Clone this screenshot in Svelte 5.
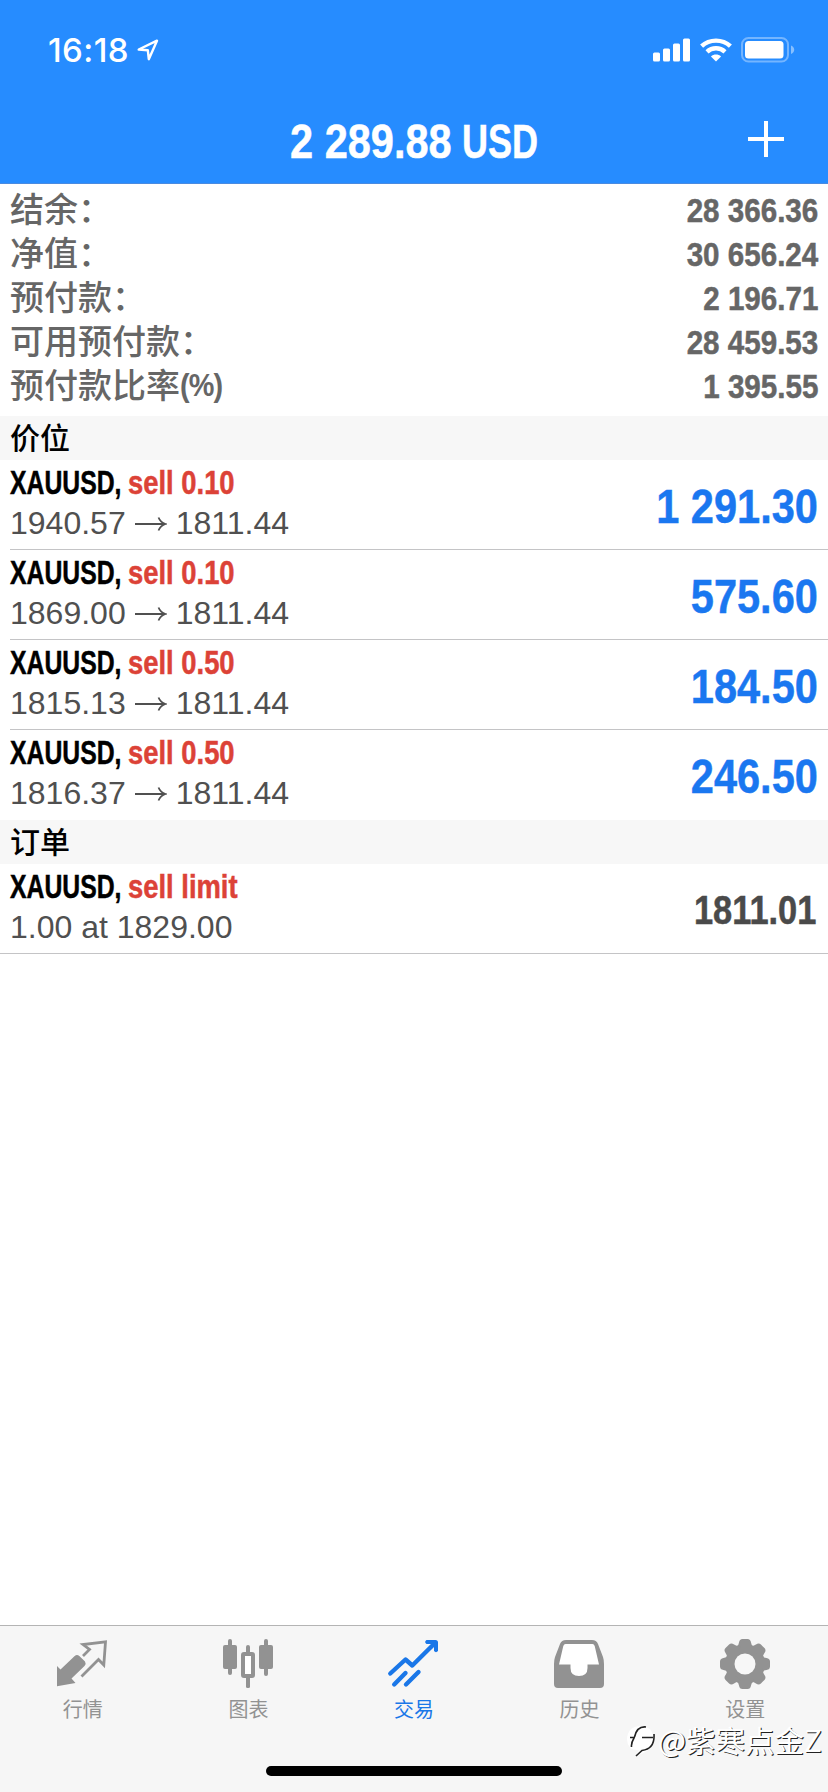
<script lang="ts">
	type Position = { symbol: string; side: string; open: string; current: string; profit: string };

	const balance = { amount: '2 289.88', currency: 'USD' };

	const summary = [
		{ label: '结余：', value: '28 366.36' },
		{ label: '净值：', value: '30 656.24' },
		{ label: '预付款：', value: '2 196.71' },
		{ label: '可用预付款：', value: '28 459.53' },
		{ label: '预付款比率', unit: '(%)', value: '1 395.55' }
	];

	const positions: Position[] = [
		{ symbol: 'XAUUSD,', side: 'sell 0.10', open: '1940.57', current: '1811.44', profit: '1 291.30' },
		{ symbol: 'XAUUSD,', side: 'sell 0.10', open: '1869.00', current: '1811.44', profit: '575.60' },
		{ symbol: 'XAUUSD,', side: 'sell 0.50', open: '1815.13', current: '1811.44', profit: '184.50' },
		{ symbol: 'XAUUSD,', side: 'sell 0.50', open: '1816.37', current: '1811.44', profit: '246.50' }
	];

	const tabs = [
		{ id: 'quotes', label: '行情' },
		{ id: 'chart', label: '图表' },
		{ id: 'trade', label: '交易' },
		{ id: 'history', label: '历史' },
		{ id: 'settings', label: '设置' }
	];

	let active = $state('trade');
</script>

<div class="screen">
	<header>
		<div class="status">
			<span class="clock">16:18</span>
			<svg class="locate" width="22" height="22" viewBox="0 0 22 22">
				<path d="M1.7 10.5 20 1.7 11.8 20.2 10.8 11.2Z" fill="none" stroke="#fff" stroke-width="2.4" stroke-linejoin="round" />
			</svg>
			<div class="indicators">
				<svg width="38" height="24" viewBox="0 0 38 24" fill="#fff">
					<rect x="0" y="14.5" width="7" height="9" rx="1.5" />
					<rect x="10" y="10.5" width="7" height="13" rx="1.5" />
					<rect x="20" y="5.5" width="7" height="18" rx="1.5" />
					<rect x="30" y="0.5" width="7" height="23" rx="1.5" />
				</svg>
				<svg class="wifi" width="32" height="24" viewBox="0 0 32 24">
					<g fill="none" stroke="#fff" stroke-width="4.4">
						<path d="M1.6 8.2C9.6 .7 22.4 .7 30.4 8.2" />
						<path d="M7 13.8C12 9.1 20 9.1 25 13.8" />
					</g>
					<path d="M10.9 18.4C13.8 15.9 18.2 15.9 21.1 18.4L16 23.6Z" fill="#fff" />
				</svg>
				<svg class="battery" width="54" height="26" viewBox="0 0 54 26">
					<rect x="1" y="1" width="46" height="23.5" rx="6.5" fill="none" stroke="#fff" stroke-opacity=".36" stroke-width="2" />
					<rect x="4" y="4" width="38.5" height="17.5" rx="3.5" fill="#fff" />
					<path d="M50 8.5Q53.2 10 53.2 12.8T50 17Z" fill="#fff" fill-opacity=".45" />
				</svg>
			</div>
		</div>
		<div class="titlebar">
			<h1><span class="amount">{balance.amount}</span><span class="currency">{balance.currency}</span></h1>
			<button class="add" aria-label="add">
				<svg width="36" height="36" viewBox="0 0 36 36"><path d="M18 0V36M0 18H36" stroke="#fff" stroke-width="4" /></svg>
			</button>
		</div>
	</header>

	<main>
		<dl class="summary">
			{#each summary as item}
				<div class="line">
					<dt>{item.label}{#if item.unit}<span class="unit">{item.unit}</span>{/if}</dt>
					<dd>{item.value}</dd>
				</div>
			{/each}
		</dl>

		<h2>价位</h2>
		<ul>
			{#each positions as p}
				<li>
					<div class="info">
						<div class="name"><span class="symbol">{p.symbol}</span><span class="side">{p.side}</span></div>
						<div class="prices">
							<span>{p.open}</span>
							<svg width="32" height="16" viewBox="0 0 32 16">
								<path d="M0 8H30M23.5 1.5Q25.5 6.4 30.5 8Q25.5 9.6 23.5 14.5" fill="none" stroke="#505050" stroke-width="1.8" />
							</svg>
							<span>{p.current}</span>
						</div>
					</div>
					<span class="profit">{p.profit}</span>
				</li>
			{/each}
		</ul>

		<h2>订单</h2>
		<ul class="orders">
			<li>
				<div class="info">
					<div class="name"><span class="symbol">XAUUSD,</span><span class="side">sell limit</span></div>
					<div class="prices">1.00 at 1829.00</div>
				</div>
				<span class="market">1811.01</span>
			</li>
		</ul>
	</main>

	<nav>
		{#each tabs as tab}
			<button class="tab" class:active={active === tab.id} onclick={() => (active = tab.id)}>
				<svg width="52" height="52" viewBox="0 0 52 52">
					{#if tab.id === 'quotes'}
						<path d="M1 27 4.500 30.500 18.700 17Q21 15 23.300 17L29 22.600Q30.500 25 28.500 27L15.500 39.500 19.500 44 1 47.300Z" fill="currentColor" />
						<path d="M27 17 33.500 10.500 27 5.500 49.500 2.800 47.800 26 42.500 20.500 25.500 37.500" fill="none" stroke="currentColor" stroke-width="2.8" />
					{:else if tab.id === 'chart'}
						<g fill="currentColor">
							<rect x="6" y="0" width="4" height="36" rx="2" />
							<rect x="1" y="6" width="14" height="24" rx="2" />
							<rect x="42" y="0" width="4" height="37" rx="2" />
							<rect x="37" y="6" width="14" height="24" rx="2" />
							<rect x="24" y="6" width="4" height="10" rx="2" />
							<rect x="24" y="37" width="4" height="12" rx="1.5" />
						</g>
						<rect x="21" y="15" width="10" height="22" rx="1" fill="#fff" stroke="currentColor" stroke-width="4" />
					{:else if tab.id === 'trade'}
						<g fill="none" stroke="currentColor" stroke-width="4.4" stroke-linecap="round" stroke-linejoin="round">
							<path d="M3.3 34.5 18.5 20.5 25.3 26.5 48 4" />
							<path d="M7.2 45.5 18.5 34M19 45.5 31.5 33" />
						</g>
						<path d="M39.5 1H48.5Q51 1 51 3.5V12Q49 14.3 47 12V6L46 5H39.5Q36.8 3 39.5 1Z" fill="currentColor" />
					{:else if tab.id === 'history'}
						<path fill="currentColor" d="M13 1H39Q43.5 1 45 5L50 18Q51 21 51 25V45Q51 49 47 49H5Q1 49 1 45V25Q1 21 2 18L7 5Q8.500 1 13 1Z" />
						<path d="M12.500 5H39.500Q41 5 41.700 7L46 25.500H34.500V29Q34.500 37 26 37T17.500 29V25.500H6L10.300 7Q11 5 12.500 5Z" fill="#fff" />
					{:else}
						<g fill="currentColor">
							<circle cx="26" cy="25" r="20" />
							{#each [0, 45, 90, 135, 180, 225, 270, 315] as angle}
								<path d="M17 9.500Q19.500 7 20 3.500Q20.500 0 23.500 0H28.500Q31.500 0 32 3.500Q32.500 7 35 9.500Z" transform="rotate({angle} 26 25)" />
							{/each}
						</g>
						<circle cx="26" cy="25" r="10.500" fill="#f7f7f7" />
					{/if}
				</svg>
				<span>{tab.label}</span>
			</button>
		{/each}
	</nav>

	<div class="home"></div>

	<div class="watermark">
		<svg width="28" height="32" viewBox="0 0 28 32">
			<path d="M4 4Q12-2 23 4Q30 13 23 23Q18 29 9 30L12 25Q1 26 0 15Q0 8 4 4Z" fill="#fff" />
			<path d="M19 2Q10 1 7.500 12M3 12.500H8M15 12.500H26M7 13Q4 18 4.500 22M27 9Q28 24 15 25.500L9 31" fill="none" stroke="#222" stroke-width="1.600" />
		</svg>
		<span>@紫寒点金Z</span>
	</div>
</div>

<style>
	:global(body) {
		margin: 0;
		background: #fff;
	}

	.screen {
		position: relative;
		display: flex;
		flex-direction: column;
		width: 828px;
		height: 1792px;
		overflow: hidden;
		background: #fff;
		font-family: 'Liberation Sans', 'Noto Sans CJK SC', sans-serif;
	}

	header {
		box-sizing: border-box;
		height: 184px;
		background: #268cff;
		border-bottom: 1px solid #4a8be0;
		color: #fff;
	}

	.status {
		display: flex;
		align-items: center;
		height: 100px;
		padding: 0 33px 0 48px;
	}

	.clock {
		font: 500 33px/1 Inter, sans-serif;
		letter-spacing: 0.4px;
		width: 81px;
		white-space: nowrap;
	}

	.locate {
		margin-left: 8px;
	}

	.indicators {
		display: flex;
		align-items: center;
		margin-left: auto;
	}

	.wifi {
		margin-left: 9px;
	}

	.battery {
		margin-left: 9px;
	}

	.titlebar {
		position: relative;
		display: flex;
		align-items: center;
		justify-content: center;
		height: 83px;
	}

	/* condensed bold: regular glyphs squeezed horizontally */
	h1,
	dd,
	.name,
	.profit,
	.market {
		font-weight: 700;
		white-space: nowrap;
		-webkit-text-stroke: 0.5px currentColor;
	}

	h1 {
		display: flex;
		margin: 0;
		font-size: 48px;
		line-height: 83px;
	}

	.amount {
		width: 172px;
		transform: scaleX(0.865);
		transform-origin: left;
	}

	.currency {
		width: 77px;
		transform: scaleX(0.75);
		transform-origin: left;
	}

	button {
		padding: 0;
		border: 0;
		background: none;
		font: inherit;
	}

	.add {
		position: absolute;
		right: 44px;
		top: 21px;
		display: flex;
	}

	.summary {
		height: 232px;
		margin: 0;
		padding: 3px 10px 9px;
		box-sizing: border-box;
		color: #666;
	}

	.line {
		display: flex;
		justify-content: space-between;
		height: 44px;
		line-height: 44px;
		font-size: 34px;
	}

	dt {
		height: 42px;
		font-family: 'Noto Sans CJK SC', sans-serif;
		font-weight: 500;
		line-height: 42px;
	}

	.unit {
		display: inline-block;
		font: 700 32px/40px 'Liberation Sans', sans-serif;
		transform: translateY(-2px) scaleX(0.9);
		transform-origin: left;
		letter-spacing: -1px;
	}

	dd {
		margin: 0;
		padding-top: 1px;
		transform: scaleX(0.87);
		transform-origin: right;
	}

	h2 {
		height: 44px;
		margin: 0;
		padding-left: 10px;
		background: #f7f7f7;
		font: 500 30px/41px 'Noto Sans CJK SC', sans-serif;
	}

	ul {
		margin: 0;
		padding: 0;
		list-style: none;
	}

	li {
		display: flex;
		align-items: center;
		justify-content: space-between;
		box-sizing: border-box;
		height: 90px;
		margin-left: 10px;
		padding-right: 10px;
		border-bottom: 1px solid #c4c4c6;
	}

	ul:not(.orders) li:last-child {
		border-bottom-color: transparent;
	}

	.orders li {
		margin-left: 0;
		padding-left: 10px;
	}

	.info {
		margin-top: -3px;
	}

	.name {
		display: flex;
		height: 41px;
		font-size: 33px;
		line-height: 41px;
	}

	.symbol {
		width: 118px;
		transform: scaleX(0.75);
		transform-origin: left;
	}

	.side {
		color: #dc4237;
		transform: scaleX(0.83);
		transform-origin: left;
	}

	.prices {
		display: flex;
		align-items: center;
		gap: 9px;
		height: 41px;
		color: #505050;
		font-size: 32px;
		line-height: 41px;
	}

	.profit {
		padding-top: 4px;
		color: #1a77f0;
		font-size: 48px;
		transform: scaleX(0.865);
		transform-origin: right;
	}

	.market {
		margin-right: 2px;
		padding-top: 3px;
		color: #4a4a4a;
		font-size: 40px;
		transform: scaleX(0.86);
		transform-origin: right;
	}

	nav {
		display: flex;
		box-sizing: border-box;
		height: 167px;
		margin-top: auto;
		padding-top: 13px;
		background: #f6f6f6;
		border-top: 1px solid #b4b4b4;
	}

	.tab {
		display: flex;
		flex: 1;
		flex-direction: column;
		align-items: center;
		gap: 3px;
		color: #929292;
		font: 400 20px/30px 'Noto Sans CJK SC', sans-serif;
	}

	.tab svg {
		margin-right: 1px;
	}

	.tab.active {
		color: #1a77e8;
	}

	.home {
		position: absolute;
		left: 266px;
		top: 1766px;
		width: 296px;
		height: 10px;
		border-radius: 5px;
		background: #000;
	}

	.watermark {
		position: absolute;
		left: 627px;
		top: 1723px;
		display: flex;
		align-items: center;
		height: 36px;
		gap: 3px;
		color: #fff;
		font: 400 29.500px/36px 'Noto Sans CJK SC', sans-serif;
		white-space: nowrap;
		text-shadow: 1.200px 1.200px 0 #222;
	}

	.watermark span {
		margin-top: -4px;
	}
</style>
